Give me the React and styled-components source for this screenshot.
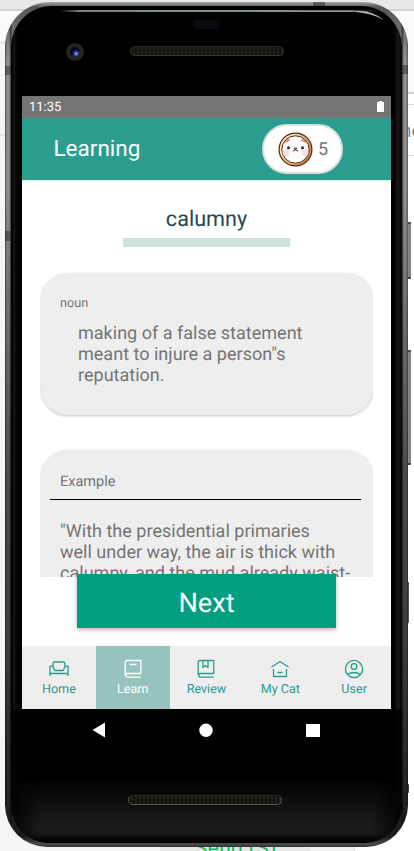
import React from 'react';
import styled, { createGlobalStyle } from 'styled-components';

const GlobalStyle = createGlobalStyle`
  * { box-sizing: border-box; }
  body { margin: 0; font-family: Roboto, sans-serif; background: #f5f5f5; text-rendering: geometricPrecision; }
`;

/* Desktop behind the emulator */
const Desktop = styled.main`
  position: relative;
  width: 414px;
  height: 851px;
  overflow: hidden;
  padding: 2px 0 0 5px;
  background:
    linear-gradient(#e8e8e8 9px, #d2d2d2 9px, #d2d2d2 11px, #fafafa 11px, #fafafa 42px, #dcdcdc 42px, #dcdcdc 43px, #f5f5f5 43px, #f5f5f5 134px, #e6e6e6 134px, #e6e6e6 136px, #f5f5f5 136px, #f5f5f5 673px, #ebebeb 673px, #ebebeb 674px, #f5f5f5 674px);
`;
const RightPane = styled.div`
  position: absolute;
  top: 0;
  right: 0;
  width: 59px;
  height: 851px;
  background: linear-gradient(#e8e8e8 9px, #d2d2d2 9px, #d2d2d2 11px, #fafafa 11px, #fafafa 92px, #d2d2d2 92px, #d2d2d2 94px, #fff 94px, #fff 104px, #d8d8d8 104px, #d8d8d8 105px, #fff 105px, #fff 155px, #d8d8d8 155px, #d8d8d8 156px, #fff 156px);
`;
const EdgeText = styled.span`
  position: absolute;
  left: 401px;
  top: 119px;
  font-size: 19px;
  line-height: 24px;
  background: linear-gradient(90deg, #6f86b8 9px, #c07a2c 10px);
  background-clip: text;
  -webkit-background-clip: text;
  color: transparent;
`;
const SendBar = styled.div`
  position: absolute;
  left: 160px;
  top: 840px;
  width: 195px;
  height: 11px;
  padding-left: 35px;
  overflow: hidden;
  border-right: 1px solid #ddd;
  background: linear-gradient(90deg, #e6e6e6 150px, #f1f1f1 150px);
  color: #07c160;
  font-size: 21px;
  line-height: 19px;
  letter-spacing: 0.3px;
  white-space: nowrap;
`;
const SideKey = styled.i`
  position: absolute;
  left: 405px;
  top: ${p => p.$top}px;
  width: ${p => p.$w || 6}px;
  height: ${p => p.$height}px;
  border-radius: 1px;
  border-top: 2px solid #444;
  border-bottom: 2px solid #444;
  background: ${p => p.$tone};
`;

/* Phone body */
const Phone = styled.div`
  position: relative;
  width: 403px;
  height: 845px;
  padding: 4px 6px 4px;
  border-radius: 45px 45px 42px 42px;
  background:
    linear-gradient(90deg, rgba(0,0,0,.45) 0, transparent 2px, transparent 4px, rgba(0,0,0,.6) 6px, transparent 7px, transparent 396px, rgba(0,0,0,.6) 397px, transparent 399px, transparent 401px, rgba(0,0,0,.4) 403px),
    linear-gradient(#a4a8a6 0, #555 5px, #929292 60px, #8e8e8e 190px, #6c6c6c 330px, #4c4c4c 480px, #404040 640px, #282828 760px, #1c1c1c 835px, #4c4c4c 842px, #303030 845px);
`;
const Antenna = styled.i`
  position: absolute;
  left: ${p => p.$left}px;
  top: ${p => p.$top}px;
  width: ${p => p.$width}px;
  height: ${p => p.$height}px;
  background: rgba(40, 40, 40, 0.5);
`;
const Bezel = styled.div`
  display: flex;
  flex-direction: column;
  height: 837px;
  padding: 0 11px;
  border-radius: 41px 41px 38px 38px;
  background:
    linear-gradient(90deg, #000 1px, #161616 3px, #070707 5px, #000 7px, #000 383px, #0c0c0c 385px, #181818 387px, #050505 391px),
    #000;
`;
const TopBezel = styled.div`
  position: relative;
  flex: none;
  height: 90px;
`;
const Shine = styled.i`
  position: absolute;
  left: 38px;
  top: 4px;
  width: 318px;
  height: 1.5px;
  border-radius: 0 50% 0 0;
  background: linear-gradient(90deg, transparent, #788684 20px, #8c9896 290px, transparent);
`;
const Corner = styled.svg`
  position: absolute;
  left: 334px;
  top: 3px;
  width: 34px;
  height: 16px;
`;
const Sensor = styled.i`
  position: absolute;
  left: 171px;
  top: 14px;
  width: 27px;
  height: 9px;
  border-radius: 5px;
  background: #090b10;
`;
const Camera = styled.i`
  position: absolute;
  left: 44px;
  top: 37px;
  width: 18px;
  height: 18px;
  border-radius: 50%;
  border: 4px solid #242424;
  background: radial-gradient(circle at 62% 68%, #a6b4ff 0, #4657c4 1.6px, #1d255e 3px, #050713 5px);
`;
const Speaker = styled.i`
  position: absolute;
  left: ${p => p.$left}px;
  top: ${p => p.$top}px;
  width: 154px;
  height: 10px;
  border: 1px solid ${p => p.$rim || '#363633'};
  border-top-color: #262624;
  border-radius: 5px;
  background: repeating-linear-gradient(90deg, #14130f 0 2px, #201e19 2px 4px);
`;
const Screen = styled.div`
  display: flex;
  flex-direction: column;
  flex: none;
  width: 369px;
  height: 613px;
  background: #fff;
`;
const BottomBezel = styled.div`
  position: relative;
  flex: 1;
  margin: 0 -11px;
  padding: 0 11px;
  border-radius: 0 0 38px 38px;
  background:
    linear-gradient(90deg, #000c 4px, transparent 30px, transparent 361px, #000c 387px),
    linear-gradient(transparent 68px, #1c1c1c 118px, #191919 125px, #050505 130px, #000);
`;

/* Application */
const StatusBar = styled.div`
  display: flex;
  justify-content: space-between;
  flex: none;
  height: 22px;
  padding: 4px 7px 0 7px;
  background: #757575;
  color: #fff;
  font-size: 13px;
  line-height: 15px;
`;
const Header = styled.header`
  display: flex;
  align-items: center;
  justify-content: space-between;
  flex: none;
  height: 62px;
  padding: 0 48px 0 31.5px;
  background: #2a9d8f;
  color: #fff;
`;
const Title = styled.h1`
  margin: 0;
  font-size: 22.5px;
  line-height: 26px;
  font-weight: 400;
`;
const CoinPill = styled.div`
  display: flex;
  align-items: center;
  gap: 5px;
  width: 81px;
  height: 50px;
  padding-left: 14px;
  border: 2px solid #dcdfde;
  border-radius: 25px;
  background: #fff;
  color: #757575;
  font-size: 18px;
`;
const Content = styled.section`
  display: flex;
  flex-direction: column;
  align-items: center;
  flex: none;
  height: 466px;
  border-top: 1px solid #dcecea;
`;
const Word = styled.h2`
  margin: 26px 0 0;
  height: 31px;
  font-size: 21.6px;
  line-height: 26px;
  font-weight: 400;
  color: #264653;
`;
const WordBar = styled.div`
  flex: none;
  width: 167px;
  height: 9px;
  background: #cce2dd;
`;
const Scroller = styled.div`
  display: flex;
  flex-direction: column;
  gap: 35px;
  flex: none;
  width: 333px;
  height: 310px;
  margin-top: 20px;
  padding: 6px 0.5px 0;
  overflow: hidden;
`;
const Card = styled.article`
  flex: none;
  height: ${p => p.$height}px;
  padding: ${p => p.$top}px 10.5px 0 10.5px;
  border-radius: 27px;
  background: #eee;
  color: #757575;
  box-shadow: 0 1px 3px rgba(0, 0, 0, 0.24);
`;
const Label = styled.div`
  padding-left: 9px;
  font-size: ${p => p.$size}px;
  line-height: 16px;
`;
const Rule = styled.div`
  height: 1px;
  margin: 9px 0.6px 21px -0.6px;
  background: #000;
`;
const Passage = styled.p`
  margin: ${p => p.$top || 0}px 0 0;
  padding-left: ${p => p.$indent}px;
  font-size: 18.05px;
  line-height: 21.2px;
  white-space: pre-line;
`;
const NextButton = styled.button`
  position: relative;
  flex: none;
  width: 259px;
  height: 54px;
  margin-top: -3px;
  padding: 3px 0 0;
  border: 0;
  background: #019e80;
  color: #fff;
  font: 400 27.2px/32px Roboto, sans-serif;
  text-rendering: geometricPrecision;
  box-shadow: 0 2px 4px rgba(0, 0, 0, 0.28);
`;
const Tabs = styled.nav`
  display: grid;
  grid-template-columns: repeat(5, 1fr);
  flex: none;
  height: 63px;
  background: #eee;
`;
const Tab = styled.a`
  display: flex;
  flex-direction: column;
  align-items: center;
  padding-top: 12px;
  gap: 2px;
  background: ${p => (p.$active ? '#96c3bd' : 'transparent')};
  color: ${p => (p.$active ? '#fff' : '#2a9d8f')};
  font-size: 12.6px;
  line-height: 15px;
`;
const Icon = styled.svg`
  width: 22px;
  height: 22px;
  fill: none;
  stroke: currentColor;
  stroke-width: 1.3;
  stroke-linejoin: round;
`;
const SystemNav = styled.div`
  display: flex;
  justify-content: space-between;
  padding: 13px 71px 0 70px;
`;

const icons = {
  Home: (
    <>
      <path d="M5 8V5.8Q5 4 6.8 4h8.4Q17 4 17 5.8V8" />
      <path d="M2 18V8.2h2.8L6.800 12.5h8.4L17.2 8.2H20V18M2 15.5h18" />
    </>
  ),
  Learn: <path d="M18.8 15.5V2.5H5.2Q3.2 2.5 3.2 4.500v12.7M18.800 15.5H5.2a1.9 1.9 0 0 0 0 3.700h13.6M8 6.500h6.5" />,
  Review: <path d="M18.8 15.5V2.5H5.2Q3.2 2.5 3.2 4.500v12.7M18.800 15.5H5.2a1.9 1.9 0 0 0 0 3.700h13.6M8 2.500v7l2.500-2 2.500 2v-7" />,
  'My Cat': <path d="M2.5 9 11 3.500 19.500 9M4.500 11v7.500h13V11M8.500 14.500h5" />,
  User: (
    <>
      <circle cx="11" cy="11" r="8.6" />
      <circle cx="11" cy="8.5" r="2.8" />
      <path d="M4.5 16.500q3-2 6.500-2t6.500 2" />
    </>
  ),
};

function Coin() {
  return (
    <svg width="35" height="35" viewBox="0 0 35 35">
      <defs>
        <linearGradient id="gold" x1="0" y1="0" x2="1" y2=".6">
          <stop offset=".3" stopColor="#ffe29a" />
          <stop offset="1" stopColor="#d47f2e" />
        </linearGradient>
      </defs>
      <circle cx="17.5" cy="17.5" r="16.4" fill="url(#gold)" stroke="#4a2b20" strokeWidth="1.2" />
      <circle cx="17.5" cy="17.5" r="13.7" fill="#fdfbfc" stroke="#4a2b20" strokeWidth="1" />
      <path d="M7.5 10.500 8.500 7.500l3.500.5zM23 8l3.500-.5 1 3z" fill="#eb9aaa" stroke="#a05068" strokeWidth=".5" />
      <circle cx="8" cy="20.5" r="3.5" fill="#f8dfe2" />
      <circle cx="27" cy="20.5" r="3.5" fill="#f8dfe2" />
      <circle cx="10.5" cy="15.8" r="1.5" fill="#38231d" />
      <circle cx="24.5" cy="15.8" r="1.5" fill="#38231d" />
      <path d="M16 16.200h3L17.500 17.700zM15 19.200l2.500-1.500 2.500 1.500" fill="none" stroke="#38231d" />
    </svg>
  );
}

export default function App() {
  return (
    <>
      <GlobalStyle />
      <Desktop>
        <RightPane />
        <EdgeText>ne</EdgeText>
        <SendBar>Send (S)</SendBar>
        <SideKey $top={222} $height={57} $tone="#858585" />
        <SideKey $top={350} $height={115} $tone="#858585" />
        <SideKey $top={582} $height={41} $w={4} $tone="#555" />
        <SideKey $top={784} $height={9} $w={4} $tone="#444" />
        <Phone>
          <Antenna $left={0} $top={64} $width={6} $height={9} />
          <Antenna $left={397} $top={63} $width={6} $height={9} />
          <Antenna $left={0} $top={229} $width={6} $height={10} />
          <Antenna $left={308} $top={0} $width={12} $height={4} />
          <Bezel>
            <TopBezel>
              <Shine />
              <Corner viewBox="0 0 34 16">
                <path d="M0 2q16-1 28 9Q15 4 0 3" fill="#aebbb8" />
              </Corner>
              <Sensor />
              <Camera />
              <Speaker $left={108} $top={40} />
            </TopBezel>
            <Screen>
              <StatusBar>
                <span>11:35</span>
                <svg width="7" height="12" viewBox="0 0 7 12">
                  <path d="M0 2h2V1h3v1h2v10H0z" fill="#fff" />
                </svg>
              </StatusBar>
              <Header>
                <Title>Learning</Title>
                <CoinPill>
                  <Coin />
                  <span>5</span>
                </CoinPill>
              </Header>
              <Content>
                <Word>calumny</Word>
                <WordBar />
                <Scroller>
                  <Card $height={142} $top={22.5}>
                    <Label $size={12.7}>noun</Label>
                    <Passage $indent={27} $top={11.5}>
                      {'making of a false statement\nmeant to injure a person"s\nreputation.'}
                    </Passage>
                  </Card>
                  <Card $height={220} $top={24}>
                    <Label $size={14.5}>Example</Label>
                    <Rule />
                    <Passage $indent={9}>
                      {'"With the presidential primaries\nwell under way, the air is thick with\ncalumny, and the mud already waist-'}
                    </Passage>
                  </Card>
                </Scroller>
                <NextButton>Next</NextButton>
              </Content>
              <Tabs>
                {Object.entries(icons).map(([name, drawing]) => (
                  <Tab key={name} $active={name === 'Learn'}>
                    <Icon viewBox="0 0 22 22">{drawing}</Icon>
                    {name}
                  </Tab>
                ))}
              </Tabs>
            </Screen>
            <BottomBezel>
              <SystemNav>
                <svg width="14" height="16" viewBox="0 0 14 16"><path d="M13 .5v15L.5 8z" fill="#fff" /></svg>
                <svg width="14" height="16" viewBox="0 0 14 16"><circle cx="7" cy="8.3" r="6.7" fill="#fff" /></svg>
                <svg width="14" height="16" viewBox="0 0 14 16"><path d="M0 2h14v13H0z" fill="#fff" /></svg>
              </SystemNav>
              <Speaker $left={117} $top={86} $rim="#555550" />
            </BottomBezel>
          </Bezel>
        </Phone>
      </Desktop>
    </>
  );
}
